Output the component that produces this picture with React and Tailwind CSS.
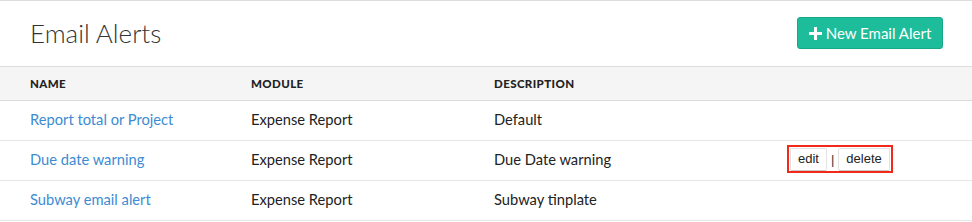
const rows = [
  { name: 'Report total or Project', module: 'Expense Report', desc: 'Default' },
  { name: 'Due date warning', module: 'Expense Report', desc: 'Due Date warning', actions: true },
  { name: 'Subway email alert', module: 'Expense Report', desc: 'Subway tinplate' },
]

function Row({ row }) {
  return (
    <div className="flex h-10 items-center border-b border-[#e6e6e6] pb-[3px] text-[14.7px] text-[#222]">
      <div className="w-[251px] pl-[30px] text-[#3d8bd3]">{row.name}</div>
      <div className="w-[243px]">{row.module}</div>
      <div className="w-[293px]">{row.desc}</div>
      {row.actions && (
        <div className="flex h-[28px] w-[106px] items-center border-2 border-[#f0291a] px-px font-['Liberation_Sans',sans-serif] text-[13px] text-[#222]">
          <span className="flex h-[23px] items-center rounded-[2px] border border-[#e2e2e2] border-b-[#c8c8c8] bg-white px-[7px]">edit</span>
          <span className="px-[4px] text-[13px] font-light leading-none text-[#333]">|</span>
          <span className="flex h-[23px] items-center rounded-[2px] border border-[#e2e2e2] border-b-[#c8c8c8] bg-white px-[7px]">delete</span>
        </div>
      )}
    </div>
  )
}

export default function App() {
  return (
    <div className="h-[222px] w-[972px] overflow-hidden bg-white font-['Lato',sans-serif]">
      <div className="border-t border-[#dddddd]" />
      <div className="flex h-[65px] items-start justify-between pl-[30px] pr-[29px]">
        <h1 className="mt-[19px] text-[26px] font-light leading-none text-[#333]">Email Alerts</h1>
        <button className="mt-[16px] flex h-[32px] w-[146px] items-center justify-center gap-[4px] rounded-[3px] border border-[#17a888] bg-[#1dbc9a] text-[15px] text-white">
          <svg width="13" height="13" viewBox="0 0 13 13">
            <path d="M5 0h3v5h5v3H8v5H5V8H0V5h5z" fill="white" />
          </svg>
          New Email Alert
        </button>
      </div>
      <div className="flex h-[35px] items-center border-y border-[#dcdcdc] bg-[#f5f5f5] text-[11.5px] font-black tracking-[0.4px] text-[#222]">
        <div className="w-[251px] pl-[30px]">NAME</div>
        <div className="w-[243px]">MODULE</div>
        <div>DESCRIPTION</div>
      </div>
      {rows.map((r) => (
        <Row key={r.name} row={r} />
      ))}
    </div>
  )
}
